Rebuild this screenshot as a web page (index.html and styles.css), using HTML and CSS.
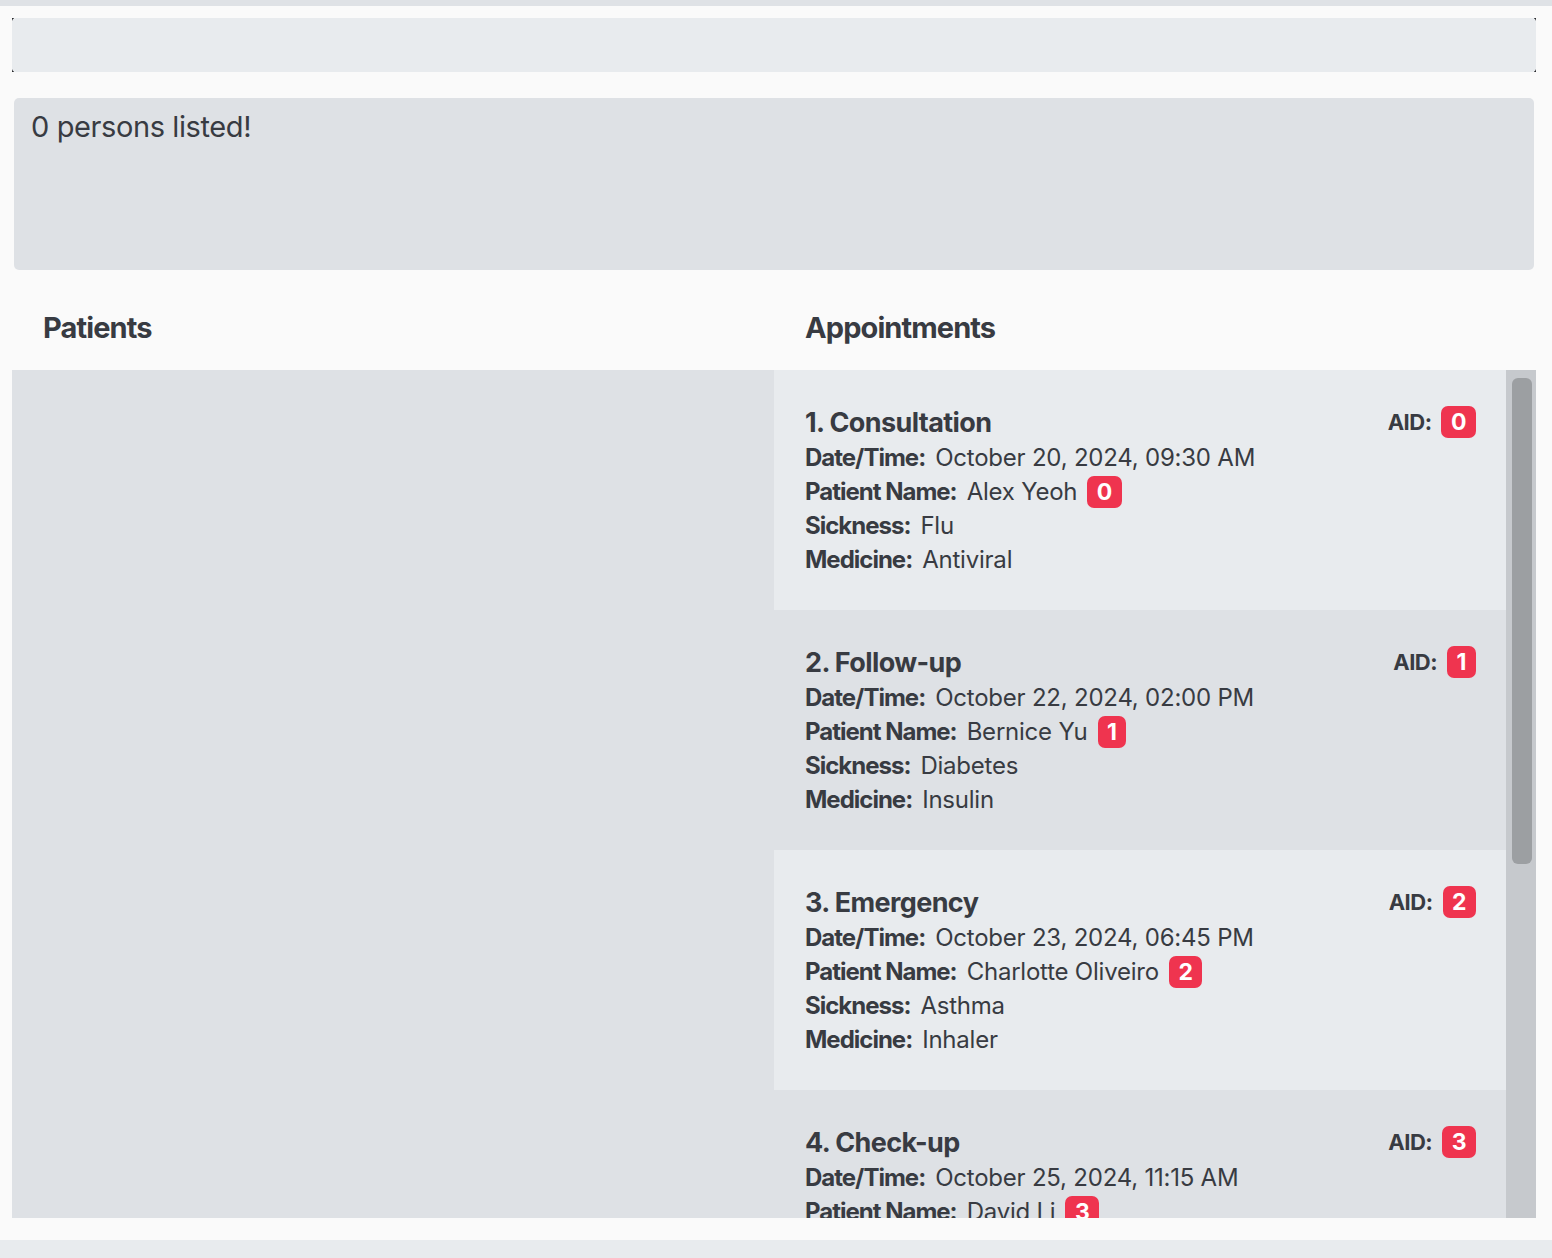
FILE: index.html
```html
<!DOCTYPE html>
<html>
<head>
<meta charset="utf-8">
<link rel="stylesheet" href="styles.css">
</head>
<body>
<div class="topbar"></div>
<div class="main">
  <div class="command-frame"><div class="command"></div></div>
  <div class="result">0 persons listed!</div>
  <div class="headers">
    <div class="col-head">Patients</div>
    <div class="col-head">Appointments</div>
  </div>
  <div class="panel">
    <div class="patients"></div>
    <div class="appts">
      <div class="list">
        <div class="card light">
          <div class="row-top"><div class="title">1. Consultation</div><div class="aid">AID: <span class="badge">0</span></div></div>
          <div class="line"><b>Date/Time:</b> October 20, 2024, 09:30 AM</div>
          <div class="line"><b>Patient Name:</b> Alex Yeoh <span class="badge">0</span></div>
          <div class="line"><b>Sickness:</b> Flu</div>
          <div class="line"><b>Medicine:</b> Antiviral</div>
        </div>
        <div class="card dark">
          <div class="row-top"><div class="title">2. Follow-up</div><div class="aid">AID: <span class="badge">1</span></div></div>
          <div class="line"><b>Date/Time:</b> October 22, 2024, 02:00 PM</div>
          <div class="line"><b>Patient Name:</b> Bernice Yu <span class="badge">1</span></div>
          <div class="line"><b>Sickness:</b> Diabetes</div>
          <div class="line"><b>Medicine:</b> Insulin</div>
        </div>
        <div class="card light">
          <div class="row-top"><div class="title">3. Emergency</div><div class="aid">AID: <span class="badge">2</span></div></div>
          <div class="line"><b>Date/Time:</b> October 23, 2024, 06:45 PM</div>
          <div class="line"><b>Patient Name:</b> Charlotte Oliveiro <span class="badge">2</span></div>
          <div class="line"><b>Sickness:</b> Asthma</div>
          <div class="line"><b>Medicine:</b> Inhaler</div>
        </div>
        <div class="card dark">
          <div class="row-top"><div class="title">4. Check-up</div><div class="aid">AID: <span class="badge">3</span></div></div>
          <div class="line"><b>Date/Time:</b> October 25, 2024, 11:15 AM</div>
          <div class="line"><b>Patient Name:</b> David Li <span class="badge">3</span></div>
          <div class="line"><b>Sickness:</b> Fever</div>
          <div class="line"><b>Medicine:</b> Paracetamol</div>
        </div>
      </div>
      <div class="scrollbar"><div class="thumb"></div></div>
    </div>
  </div>
</div>
<div class="bottombar"></div>
</body>
</html>
```
FILE: styles.css
```css
html, body {
  margin: 0;
  padding: 0;
  background: #fafafa;
  font-family: Inter, "Noto Sans", sans-serif;
  color: #383b42;
}
.topbar {
  height: 6px;
  background: #dfe2e6;
}
.main {
  padding: 12px 16px 0 12px;
}
.command-frame {
  height: 54px;
  background:
    linear-gradient(#2a2b2e, #2a2b2e) left top / 2px 3px no-repeat,
    linear-gradient(#2a2b2e, #2a2b2e) right top / 2px 3px no-repeat,
    linear-gradient(#2a2b2e, #2a2b2e) left bottom / 2px 3px no-repeat,
    linear-gradient(#2a2b2e, #2a2b2e) right bottom / 2px 3px no-repeat;
}
.command {
  height: 100%;
  background: #e8ebee;
  border-radius: 4px;
}
.result {
  margin: 26px 2px 0 2px;
  height: 172px;
  box-sizing: border-box;
  background: #dee1e5;
  border-radius: 5px;
  padding: 11px 17px;
  font-size: 29px;
  line-height: 36px;
  letter-spacing: -0.4px;
}
.headers {
  display: grid;
  grid-template-columns: 762px 1fr;
  height: 100px;
  align-items: center;
}
.col-head {
  padding-left: 31px;
  font-size: 29px;
  font-weight: 700;
  letter-spacing: -0.9px;
  padding-top: 14px;
}
.panel {
  display: grid;
  grid-template-columns: 762px 1fr;
  height: 848px;
}
.patients {
  background: #dee1e5;
}
.appts {
  display: flex;
  overflow: hidden;
}
.list {
  flex: 1;
  overflow: hidden;
}
.card {
  height: 240px;
  box-sizing: border-box;
  padding: 33px 30px 0 31px;
}
.light { background: #e8ebee; }
.dark { background: #dee1e5; }
.row-top {
  display: flex;
  justify-content: space-between;
  align-items: center;
  height: 38px;
}
.title {
  font-size: 27px;
  font-weight: 700;
  letter-spacing: -0.6px;
}
.aid {
  font-size: 22px;
  font-weight: 700;
  letter-spacing: -0.5px;
  display: flex;
  align-items: center;
  gap: 10px;
}
.line {
  font-size: 24px;
  line-height: 34px;
  height: 34px;
  display: flex;
  align-items: center;
  gap: 10px;
  letter-spacing: -0.22px;
}
.line b {
  font-weight: 700;
  letter-spacing: -1px;
}
.badge {
  display: inline-flex;
  align-items: center;
  justify-content: center;
  background: #ef344f;
  color: #fff;
  font-weight: 700;
  font-size: 23px;
  height: 32px;
  box-sizing: border-box;
  padding: 0 9.5px;
  border-radius: 7px;
  letter-spacing: 0;
}
.scrollbar {
  width: 30px;
  background: #c6c9cd;
  padding: 8px 4px 0 6px;
  box-sizing: border-box;
}
.thumb {
  height: 486px;
  background: #9c9fa2;
  border-radius: 6px;
}
.bottombar {
  margin-top: 22px;
  height: 18px;
  background: #e8ebee;
}
```
